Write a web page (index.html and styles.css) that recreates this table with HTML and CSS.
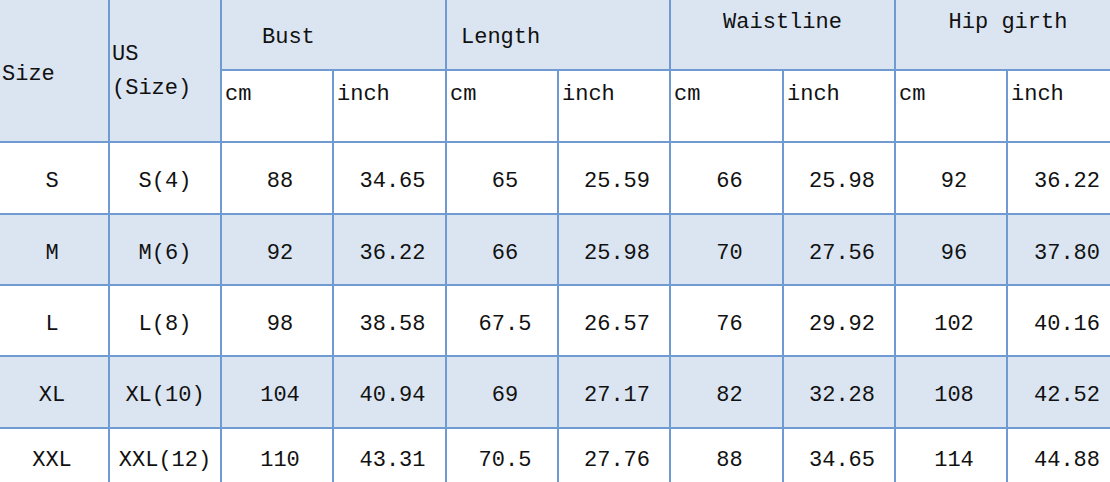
FILE: index.html
```html
<!DOCTYPE html>
<html>
<head>
<meta charset="utf-8">
<link rel="stylesheet" href="styles.css">
</head>
<body>
<div class="chart">
  <div class="c hd size-h">Size</div>
  <div class="c hd us-h"><span>US</span><span>(Size)</span></div>
  <div class="c hd grp bust">Bust</div>
  <div class="c hd grp length">Length</div>
  <div class="c hd grp top">Waistline</div>
  <div class="c hd grp top">Hip girth</div>
  <div class="c unit">cm</div><div class="c unit">inch</div>
  <div class="c unit">cm</div><div class="c unit">inch</div>
  <div class="c unit">cm</div><div class="c unit">inch</div>
  <div class="c unit">cm</div><div class="c unit">inch</div>

  <div class="c d k1">S</div><div class="c d k2">S(4)</div><div class="c d">88</div><div class="c d">34.65</div><div class="c d">65</div><div class="c d">25.59</div><div class="c d">66</div><div class="c d">25.98</div><div class="c d">92</div><div class="c d">36.22</div>
  <div class="c d alt k1">M</div><div class="c d alt k2">M(6)</div><div class="c d alt">92</div><div class="c d alt">36.22</div><div class="c d alt">66</div><div class="c d alt">25.98</div><div class="c d alt">70</div><div class="c d alt">27.56</div><div class="c d alt">96</div><div class="c d alt">37.80</div>
  <div class="c d k1">L</div><div class="c d k2">L(8)</div><div class="c d">98</div><div class="c d">38.58</div><div class="c d">67.5</div><div class="c d">26.57</div><div class="c d">76</div><div class="c d">29.92</div><div class="c d">102</div><div class="c d">40.16</div>
  <div class="c d alt k1">XL</div><div class="c d alt k2">XL(10)</div><div class="c d alt">104</div><div class="c d alt">40.94</div><div class="c d alt">69</div><div class="c d alt">27.17</div><div class="c d alt">82</div><div class="c d alt">32.28</div><div class="c d alt">108</div><div class="c d alt">42.52</div>
  <div class="c d k1">XXL</div><div class="c d k2">XXL(12)</div><div class="c d">110</div><div class="c d">43.31</div><div class="c d">70.5</div><div class="c d">27.76</div><div class="c d">88</div><div class="c d">34.65</div><div class="c d">114</div><div class="c d">44.88</div>
</div>
</body>
</html>
```

FILE: styles.css
```css
html, body {
  margin: 0;
  padding: 0;
  background: #ffffff;
  overflow: hidden;
}
.chart {
  display: grid;
  grid-template-columns: 108px 110px 110px 111px 110px 110px 111px 110px 110px 112px;
  grid-template-rows: 69px 70px 70px 69px 69px 70px 56px;
  gap: 2px;
  background: #6f9ad2;
  width: 1120px;
  font-family: "Liberation Mono", "Courier New", monospace;
  font-size: 22px;
  color: #111111;
}
.c {
  background: #ffffff;
  display: flex;
  align-items: center;
  white-space: nowrap;
}
.hd {
  background: #dbe5f1;
}
.size-h {
  grid-row: span 2;
  padding-left: 2px;
  padding-top: 8px;
}
.us-h {
  grid-row: span 2;
  flex-direction: column;
  align-items: flex-start;
  justify-content: center;
  padding-left: 2px;
  line-height: 34px;
  padding-top: 2px;
}
.grp {
  grid-column: span 2;
}
.bust {
  padding-left: 40px;
  padding-top: 6px;
}
.length {
  padding-left: 14px;
  padding-top: 6px;
}
.top {
  justify-content: center;
  align-items: flex-start;
  padding-top: 10px;
}
.unit {
  align-items: flex-start;
  padding-top: 11px;
  padding-left: 3px;
}
.d {
  justify-content: center;
  padding-top: 7px;
  padding-left: 6px;
}
.d.k1 {
  padding-left: 0;
  padding-right: 4px;
}
.d.k2 {
  padding-left: 0;
}
.alt {
  background: #dbe5f1;
}
```
